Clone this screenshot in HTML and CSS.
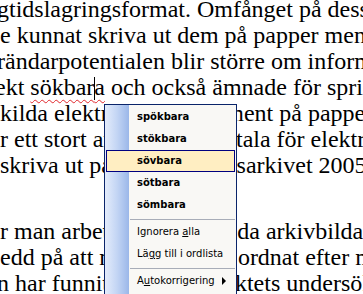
FILE: index.html
```html
<!DOCTYPE html>
<html lang="sv">
<head>
    <meta charset="UTF-8">
    <title>Stavningskontroll</title>
    <link rel="stylesheet" href="styles.css">
</head>
<body>
    <div class="page">
        <p class="para first">
            <span class="line cut">gtidslagringsformat. Omfånget på dess</span>
            <span class="line">e kunnat skriva ut dem på papper men</span>
            <span class="line cut">rändarpotentialen blir större om inform</span>
            <span class="line cut-more">ekt <span class="misspelled">sökbar<span class="caret"></span>a</span> och också ämnade för spri</span>
            <span class="line">kilda elektroniska dokument på papper</span>
            <span class="line">r ett stort antal skäl som tala för elektr</span>
            <span class="line">skriva ut på papper i Riksarkivet 2005</span>
        </p>
        <p class="para">
            <span class="line">r man arbetat med enskilda arkivbildare</span>
            <span class="line">edd på att materialet var ordnat efter m</span>
            <span class="line cut">n har funnit att alla projektets undersökning</span>
        </p>
    </div>

    <!-- context menu from the spell check -->
    <div class="menu">
        <div class="menu-item suggestion">spökbara</div>
        <div class="menu-item suggestion">stökbara</div>
        <div class="menu-item suggestion active">sövbara</div>
        <div class="menu-item suggestion">sötbara</div>
        <div class="menu-item suggestion">sömbara</div>
        <div class="separator"></div>
        <div class="menu-item">Ignorera <u>a</u>lla</div>
        <div class="menu-item">Lä<u>g</u>g till i ordlista</div>
        <div class="separator"></div>
        <div class="menu-item has-sub">
            <span>A<u>u</u>tokorrigering</span>
            <span class="arrow"></span>
        </div>
    </div>
</body>
</html>
```

FILE: styles.css
```css
* {
    margin: 0;
    padding: 0;
    box-sizing: border-box;
}

html, body {
    height: 100%;
}

body {
    background: #ffffff;
    color: #000000;
    overflow: hidden;
    position: relative;
}

.page {
    font-family: 'Liberation Serif', 'Times New Roman', serif;
    font-size: 24px;
    line-height: 26px;
}

.para {
    margin-top: 40px;
}

.para.first {
    margin-top: -4px;
}

.line {
    display: block;
    white-space: nowrap;
}

.line.cut {
    text-indent: -3px;
}

.line.cut-more {
    text-indent: -5px;
}

.misspelled {
    text-decoration: underline wavy #e0262b;
    text-decoration-thickness: 1px;
    text-underline-offset: 4px;
}

.caret {
    display: inline-block;
    width: 1px;
    height: 23px;
    margin-right: -1px;
    background: #000000;
    vertical-align: -5px;
}

/* menu */
.menu {
    position: absolute;
    left: 104px;
    top: 104px;
    width: 133px;
    padding: 1px 1px 20px 1px;
    border: 1px solid #0a246a;
    background: linear-gradient(to right, #e4ecfb 0px, #c3d5f4 12px, #9bb7e9 24px, #f9f8f5 24px);
    font-family: 'DejaVu Sans', Tahoma, Verdana, sans-serif;
    font-size: 10px;
}

.menu-item {
    height: 22px;
    line-height: 20px;
    padding-left: 30px;
    padding-right: 8px;
    border: 1px solid transparent;
    white-space: nowrap;
}

.menu-item.suggestion {
    font-weight: 700;
}

.menu-item.active {
    background: #ffeec2;
    border-color: #000080;
}

.menu-item.has-sub {
    display: flex;
    align-items: center;
    justify-content: space-between;
}

.arrow {
    width: 0;
    height: 0;
    border-left: 4px solid #000000;
    border-top: 4px solid transparent;
    border-bottom: 4px solid transparent;
}

.separator {
    height: 5px;
    margin-left: 24px;
    padding-top: 3px;
}

.separator::after {
    content: '';
    display: block;
    height: 1px;
    background: #a8adb8;
}
```
